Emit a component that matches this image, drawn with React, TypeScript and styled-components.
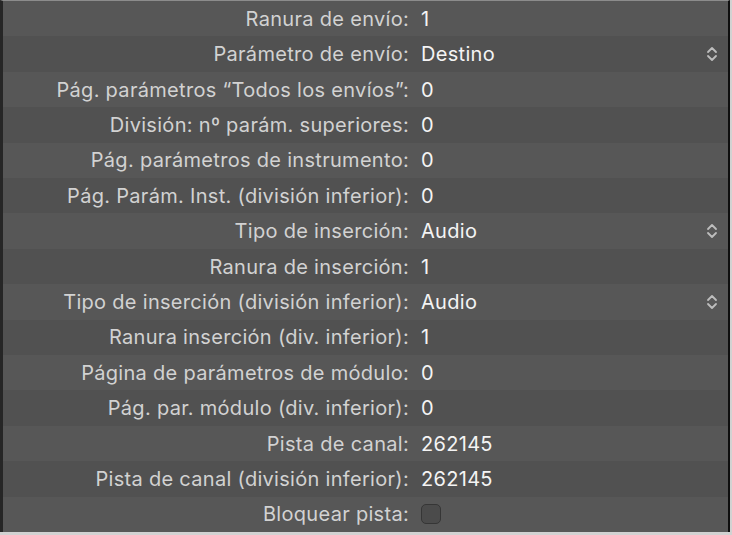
import React from "react";
import styled, { createGlobalStyle } from "styled-components";

const Global = createGlobalStyle`
  html, body { margin: 0; padding: 0; background: #d2d2d2; }
  body { font-family: Inter, "Noto Sans", "Liberation Sans", sans-serif; }
`;

const Panel = styled.div`
  width: 725px;
  height: 531px;
  box-sizing: content-box;
  border-left: 3px solid #262626;
  border-right: 2px solid #0e0e0e;
  border-top: 1px solid #8c8c8c;
  display: flex;
  flex-direction: column;
`;

const Row = styled.div<{ $alt: boolean }>`
  flex: 1 1 0;
  display: grid;
  grid-template-columns: 406px 1fr 24px;
  column-gap: 12px;
  align-items: center;
  background: ${(p) => (p.$alt ? "#515151" : "#575757")};
  font-size: 20px;
  letter-spacing: 0.3px;
`;

const Label = styled.div`
  text-align: right;
  color: #d2d2d2;
  white-space: nowrap;
`;

const Value = styled.div`
  color: #f4f4f4;
  white-space: nowrap;
  display: flex;
  align-items: center;
`;

const Stepper = styled.div`
  display: flex;
  align-items: center;
  justify-content: flex-start;
  padding-left: 2px;
`;

const Check = styled.div`
  width: 20px;
  height: 20px;
  box-sizing: border-box;
  border-radius: 5px;
  border: 1.5px solid #363636;
  background: #4b4b4b;
`;

const UpDown = () => (
  <svg width="12" height="18" viewBox="0 0 12 18" fill="none" stroke="#bdbdbd" strokeWidth="1.8" strokeLinecap="round" strokeLinejoin="round">
    <polyline points="2,7 6,3 10,7" />
    <polyline points="2,11 6,15 10,11" />
  </svg>
);

type R = { label: string; value?: string; popup?: boolean; check?: boolean };

const rows: R[] = [
  { label: "Ranura de envío:", value: "1" },
  { label: "Parámetro de envío:", value: "Destino", popup: true },
  { label: "Pág. parámetros “Todos los envíos”:", value: "0" },
  { label: "División: nº parám. superiores:", value: "0" },
  { label: "Pág. parámetros de instrumento:", value: "0" },
  { label: "Pág. Parám. Inst. (división inferior):", value: "0" },
  { label: "Tipo de inserción:", value: "Audio", popup: true },
  { label: "Ranura de inserción:", value: "1" },
  { label: "Tipo de inserción (división inferior):", value: "Audio", popup: true },
  { label: "Ranura inserción (div. inferior):", value: "1" },
  { label: "Página de parámetros de módulo:", value: "0" },
  { label: "Pág. par. módulo (div. inferior):", value: "0" },
  { label: "Pista de canal:", value: "262145" },
  { label: "Pista de canal (división inferior):", value: "262145" },
  { label: "Bloquear pista:", check: true },
];

export default function App() {
  return (
    <>
      <Global />
      <Panel>
        {rows.map((r, i) => (
          <Row key={i} $alt={i % 2 === 1}>
            <Label>{r.label}</Label>
            <Value>{r.check ? <Check /> : r.value}</Value>
            <Stepper>{r.popup ? <UpDown /> : null}</Stepper>
          </Row>
        ))}
      </Panel>
    </>
  );
}
